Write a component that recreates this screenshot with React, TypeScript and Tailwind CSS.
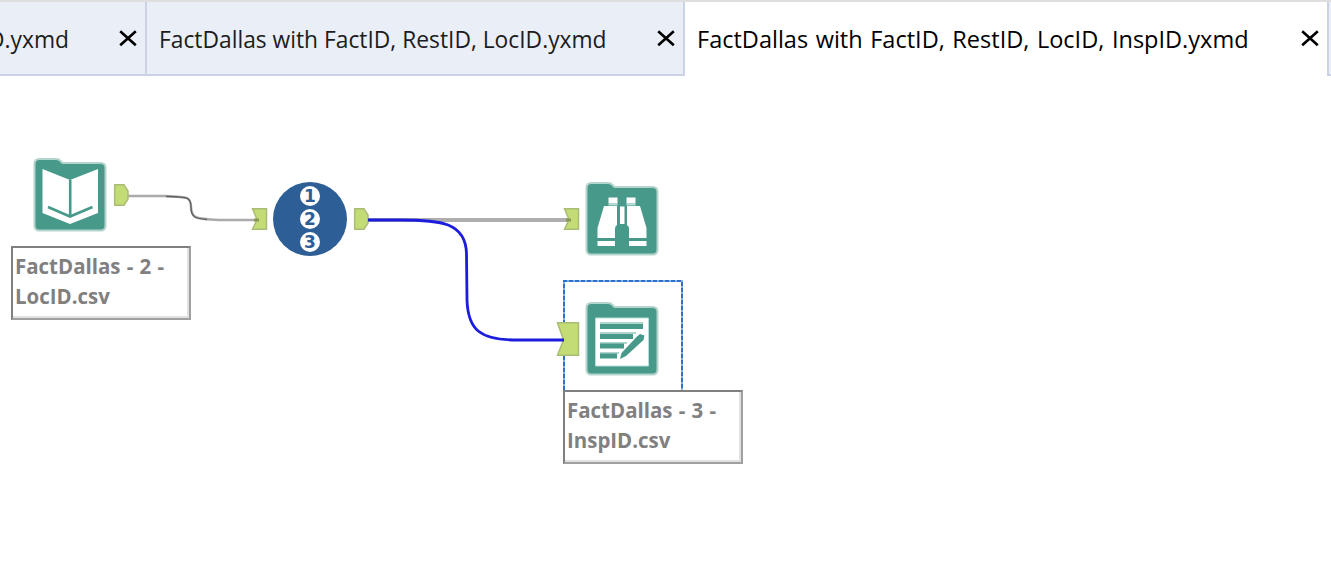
import type { ReactNode } from "react";

function CloseIcon() {
  return (
    <svg className="block h-[18px] w-[20px] shrink-0" viewBox="0 0 20 18">
      <path d="M2.200 1.300 L17.800 15.300 M17.800 1.300 L2.200 15.300" stroke="#000" strokeWidth="2.600" fill="none" />
    </svg>
  );
}

function TabText({ className, children }: { className: string; children: ReactNode }) {
  return <span className={`block whitespace-nowrap text-[24.5px] leading-[32px] ${className}`}>{children}</span>;
}

function TabBar() {
  return (
    <div className="flex h-[76px] w-full overflow-hidden border-t-2 border-[#dedede] bg-white">
      <div className="flex w-[147px] shrink-0 items-start border-r-2 border-b-2 border-[#cbd2e5] bg-[#eaeef7] pt-[21px]">
        <div className="flex w-[69px] justify-end">
          <TabText className="origin-right scale-x-[0.93] text-[#1c1c1c]">D.yxmd</TabText>
        </div>
        <div className="ml-[49px] pt-[7px]"><CloseIcon /></div>
      </div>
      <div className="flex w-[538px] shrink-0 items-start border-r-2 border-b-2 border-[#cbd2e5] bg-[#eaeef7] pt-[21px] pl-[12px]">
        <div className="w-[497px]">
          <TabText className="origin-left scale-x-[0.93] text-[#1c1c1c]">FactDallas with FactID, RestID, LocID.yxmd</TabText>
        </div>
        <div className="pt-[7px]"><CloseIcon /></div>
      </div>
      <div className="flex w-[642px] shrink-0 items-start bg-white pt-[21px] pl-[12px]">
        <div className="w-[603px]">
          <TabText className="origin-left scale-x-[0.96] [word-spacing:1.5px] text-black">FactDallas with FactID, RestID, LocID, InspID.yxmd</TabText>
        </div>
        <div className="pt-[7px]"><CloseIcon /></div>
      </div>
      <div className="flex-1 border-b-2 border-l-2 border-[#cbd2e5] bg-[#eaeef7]" />
    </div>
  );
}

function FolderTool({ children }: { children: ReactNode }) {
  return (
    <svg className="block h-[76px] w-[76px]" viewBox="0 0 76 76">
      <path
        d="M7.500 2 H24 Q27 2 28.500 4 L30.500 6 H68.500 Q73.500 6 73.500 11 V68.500 Q73.500 73.500 68.500 73.500 H7.500 Q2.500 73.500 2.500 68.500 V7 Q2.500 2 7.500 2 Z"
        fill="#47998a"
        stroke="#b3d3cd"
        strokeWidth="2"
      />
      {children}
    </svg>
  );
}

function InputTool() {
  return (
    <FolderTool>
      <path d="M10.500 12 L38 23 L66 12 V56 L38 67 L10.500 56 Z" fill="#fff" />
      <path d="M38.200 23 V60 M16 50 L38 59.500 L60.500 50" fill="none" stroke="#47998a" strokeWidth="2.600" />
    </FolderTool>
  );
}

function BrowseTool() {
  return (
    <FolderTool>
      <g fill="#fff">
        <path d="M24.500 16.500 h9 v6 h-9 Z M42.500 16.500 h9 v6 h-9 Z" />
        <path d="M20 25 H33 V44 Q31 45 31 48 V57 H13.500 V47 Z M56 25 H43 V44 Q45 45 45 48 V57 H62.500 V47 Z" />
        <path d="M36 25.500 H40.500 V43 H36 Z M13.500 60 H31 V65 H13.500 Z M45 60 H62.500 V65 H45 Z" />
      </g>
      <path d="M24.500 23.500 H33.500 M42.500 23.500 H51.500" stroke="#b9ded7" strokeWidth="2" />
    </FolderTool>
  );
}

function OutputTool() {
  return (
    <FolderTool>
      <path d="M11.500 17 H64.500 V65 H11.500 Z" fill="#fff" stroke="#b9ded7" strokeWidth="1" />
      <path d="M16 22 H59 M16 32 H52 M16 42 H43 M16 52 H35" stroke="#b0d5ce" strokeWidth="2" />
      <path d="M16 25.500 H59 M16 35.500 H49 M16 45 H40 M16 55 H33" stroke="#47998a" strokeWidth="5" fill="none" />
      <path d="M53 35.500 L56 33 L60.500 34.500 L59.500 39 L42 55 L36 58 L37.500 52 Z" fill="#47998a" />
    </FolderTool>
  );
}

function RecordIdTool() {
  return (
    <div className="flex h-[74px] w-[74px] flex-col items-center gap-[3px] rounded-full bg-[#2e5e96] pt-[4px] font-['DejaVu_Sans',sans-serif] text-[17px] leading-[20px] font-bold text-[#2e5e96]">
      {["1", "2", "3"].map((digit) => (
        <div key={digit} className="flex h-[20px] w-[20px] items-center justify-center rounded-full bg-white">{digit}</div>
      ))}
    </div>
  );
}

function Label({ lines }: { lines: string[] }) {
  return (
    <div className="h-[74px] w-[180px] border-2 border-t-[#808080] border-r-[#a0a0a0] border-b-[#a0a0a0] border-l-[#808080] bg-white">
      <div className="h-full border-r-2 border-b-2 border-[#e0e0e0] pt-[2px] pl-[2px]">
        {lines.map((line) => (
          <div key={line} className="origin-left scale-x-[0.93] text-[22px] leading-[30px] font-bold [word-spacing:1px] whitespace-nowrap text-[#808080]">
            {line}
          </div>
        ))}
      </div>
    </div>
  );
}

function Wires() {
  return (
    <svg className="absolute top-0 left-0 h-[512px] w-[1331px]" viewBox="0 76 1331 512">
      <g fill="none">
        <path d="M127 196 H166 C188 197 191 197 191 207 C191 219 197 219 220 220 H262" stroke="#aaa" strokeWidth="2.500" />
        <path d="M166 196.500 C188 197 191 197 191 207 C191 218 196 218.500 207 219.500" stroke="#606060" strokeWidth="1.300" />
        <path d="M368 220 H574" stroke="#aeaeae" strokeWidth="4" />
        <path d="M564 390 V281 H682 V390" stroke="#82b4ea" strokeWidth="2" />
        <path d="M564 390 V281 H682 V390" stroke="#2c70c9" strokeWidth="2" strokeDasharray="4 2" />
      </g>
      <g fill="#c3dc76" stroke="#a9bd76" strokeWidth="1.500">
        <path d="M114.700 184.700 H124 L128 191 V199 L124 205.300 H114.700 Z" />
        <path d="M354.700 208.700 H364 L368 215 V223 L364 229.300 H354.700 Z" />
        <path d="M252.500 208.700 H266.500 V229.300 H252.500 L257 219.500 Z" />
        <path d="M564.500 208.700 H578.500 V229.300 H564.500 L569 219.500 Z" />
        <path d="M557.500 322.700 H578.500 V355.300 H557.500 L563.500 340 Z" />
      </g>
      <path d="M254 220 H259 M566 220 H571" fill="none" stroke="#899952" strokeWidth="3" />
      <path
        d="M368 220 H400 C440 220 466 222 466.500 254 L467 300 C468 330 480 340 517 340 H564"
        fill="none"
        stroke="#1c1cde"
        strokeWidth="2.800"
      />
    </svg>
  );
}

function Canvas() {
  return (
    <main className="relative h-[512px] w-full bg-white">
      <Wires />
      <div className="absolute top-[81px] left-[32px]"><InputTool /></div>
      <div className="absolute top-[106px] left-[273px]"><RecordIdTool /></div>
      <div className="absolute top-[105px] left-[584px]"><BrowseTool /></div>
      <div className="absolute top-[225px] left-[584px]"><OutputTool /></div>
      <div className="absolute top-[170px] left-[11px]"><Label lines={["FactDallas - 2 -", "LocID.csv"]} /></div>
      <div className="absolute top-[314px] left-[563px]"><Label lines={["FactDallas - 3 -", "InspID.csv"]} /></div>
    </main>
  );
}

export default function App() {
  return (
    <div className="h-[588px] w-[1331px] overflow-hidden bg-white font-['Open_Sans','Noto_Sans',sans-serif]">
      <TabBar />
      <Canvas />
    </div>
  );
}
